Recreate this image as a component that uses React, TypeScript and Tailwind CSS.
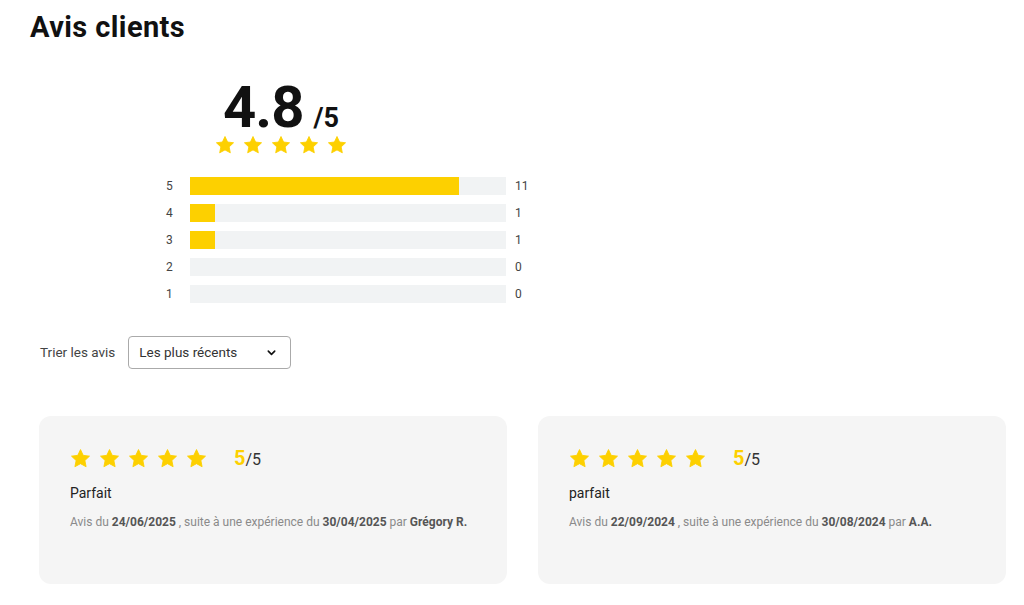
import React from 'react';

const YELLOW = '#fdd000';

const StarIcon: React.FC<{ size: number }> = ({ size }) => (
  <svg width={size} height={size} viewBox="0 0 24 24" className="shrink-0">
    <path
      d="M12 1.8l3.1 6.6 7.2.9-5.3 5 1.4 7.1L12 17.9l-6.4 3.5L7 14.3l-5.3-5 7.2-.9z"
      fill={YELLOW}
      stroke={YELLOW}
      strokeWidth="1"
      strokeLinejoin="round"
    />
  </svg>
);

interface Bar {
  label: number;
  count: number;
  pct: number;
}

const bars: Bar[] = [
  { label: 5, count: 11, pct: 85 },
  { label: 4, count: 1, pct: 8 },
  { label: 3, count: 1, pct: 8 },
  { label: 2, count: 0, pct: 0 },
  { label: 1, count: 0, pct: 0 },
];

interface Review {
  title: string;
  date: string;
  exp: string;
  author: string;
}

const reviews: Review[] = [
  { title: 'Parfait', date: '24/06/2025', exp: '30/04/2025', author: 'Grégory R.' },
  { title: 'parfait', date: '22/09/2024', exp: '30/08/2024', author: 'A.A.' },
];

const ReviewCard: React.FC<{ review: Review }> = ({ review }) => (
  <div className="flex-1 h-[168px] rounded-xl bg-[#f5f5f5] pl-[31px] pt-[27px]">
    <div className="flex items-center">
      <div className="flex gap-[8px]">
        {[0, 1, 2, 3, 4].map((i) => (
          <StarIcon key={i} size={21} />
        ))}
      </div>
      <div className="ml-[27px] flex items-baseline">
        <span className="text-[20px] font-bold text-[#fdd000]">5</span>
        <span className="text-[16px] text-[#333]">/5</span>
      </div>
    </div>
    <div className="mt-[10px] text-[14px] text-[#222]">{review.title}</div>
    <div className="mt-[9px] text-[12px] text-[#8a8a8a]">
      Avis du <b className="font-bold text-[#555]">{review.date}</b> , suite à une expérience du{' '}
      <b className="font-bold text-[#555]">{review.exp}</b> par{' '}
      <b className="font-bold text-[#555]">{review.author}</b>
    </div>
  </div>
);

const App: React.FC = () => {
  return (
    <div className="w-[1024px] h-[605px] bg-white pl-[30px] pr-[18px] font-['Roboto',sans-serif] text-[#111] overflow-hidden">
      <h1 className="pt-[10px] text-[29px] leading-[34px] font-bold tracking-[0.4px]">Avis clients</h1>

      <div className="mt-[34px] ml-[184px] w-[134px] flex flex-col items-center">
        <div className="flex items-baseline leading-none">
          <span className="text-[58px] font-bold tracking-[-1px]">4.8</span>
          <span className="ml-[10px] text-[27px] font-bold">/5</span>
        </div>
        <div className="mt-[-1px] flex gap-[8px]">
          {[0, 1, 2, 3, 4].map((i) => (
            <StarIcon key={i} size={20} />
          ))}
        </div>
      </div>

      <div className="ml-[130px] mt-[22px] flex flex-col gap-[9px]">
        {bars.map((b) => (
          <div key={b.label} className="flex items-center h-[18px]">
            <span className="w-[30px] pl-[6px] text-[12px] text-[#444]">{b.label}</span>
            <div className="h-[18px] w-[316px] bg-[#f1f3f4]">
              <div className="h-full" style={{ width: `${b.pct}%`, background: YELLOW }} />
            </div>
            <span className="ml-[9px] text-[12px] text-[#444]">{b.count}</span>
          </div>
        ))}
      </div>

      <div className="mt-[33px] flex items-center pl-[10px]">
        <span className="text-[13.5px] text-[#444]">Trier les avis</span>
        <div className="ml-[13px] flex h-[33px] w-[163px] items-center justify-between rounded-[4px] border border-[#aaa] pl-[10px] pr-[13px]">
          <span className="text-[13.5px] text-[#333]">Les plus récents</span>
          <svg width="11" height="11" viewBox="0 0 24 24" fill="none" stroke="#111" strokeWidth="3.5" strokeLinecap="round" strokeLinejoin="round">
            <path d="M5 9l7 7 7-7" />
          </svg>
        </div>
      </div>

      <div className="mt-[47px] flex gap-[31px] pl-[9px]">
        {reviews.map((r) => (
          <ReviewCard key={r.title} review={r} />
        ))}
      </div>
    </div>
  );
};

export default App;
